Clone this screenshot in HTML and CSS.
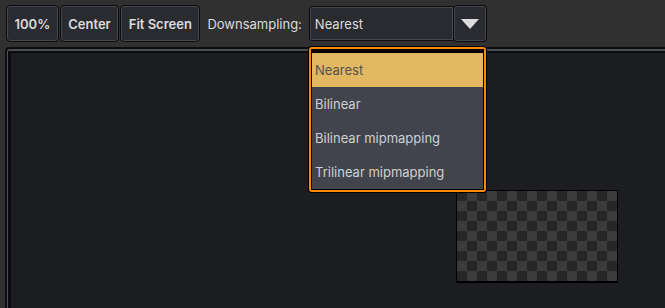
FILE: index.html
```html
<!DOCTYPE html>
<html>
<head>
<meta charset="utf-8">
<link rel="stylesheet" href="styles.css">
</head>
<body>
<div class="toolbar">
  <button class="btn">100%</button>
  <button class="btn">Center</button>
  <button class="btn">Fit Screen</button>
  <span class="label">Downsampling:</span>
  <div class="select">
    <div class="field">Nearest</div>
    <button class="arrow">
      <svg width="18" height="10" viewBox="0 0 18 10"><path d="M0 0H18L9 10Z" fill="#dcdcdc"/></svg>
    </button>
  </div>
</div>
<div class="panel">
  <div class="panel-mid">
    <div class="panel-inner">
      <div class="checker"></div>
    </div>
  </div>
</div>
<div class="popup">
  <div class="popup-ring">
    <div class="popup-body">
      <div class="item active">Nearest</div>
      <div class="item">Bilinear</div>
      <div class="item">Bilinear mipmapping</div>
      <div class="item">Trilinear mipmapping</div>
    </div>
  </div>
</div>
</body>
</html>
```

FILE: styles.css
```css
* { box-sizing: border-box; }
html, body { margin: 0; padding: 0; }
body {
  width: 665px;
  height: 308px;
  overflow: hidden;
  background: #303030;
  font-family: Inter, "Noto Sans", sans-serif;
  font-size: 13px;
  color: #dcdcdc;
  position: relative;
}
.toolbar {
  display: flex;
  align-items: center;
  height: 37px;
  margin: 5px 0 0 6px;
  gap: 1px;
}
.btn {
  height: 37px;
  padding: 0 7.5px;
  background: #2a2b30;
  border: 1px solid #0c0c0e;
  border-radius: 4px;
  box-shadow: inset 0 0 0 1px #45474e;
  color: #dcdcdc;
  font-family: inherit;
  font-size: 13px;
  font-weight: 600;
}
.label {
  margin-left: 6px;
  color: #dcdcdc;
}
.select {
  display: flex;
  align-items: center;
  margin-left: 6px;
}
.field {
  width: 145px;
  height: 35px;
  display: flex;
  align-items: center;
  padding-left: 5px;
  background: #2a2b30;
  border: 1px solid #0c0c0e;
  border-radius: 3px 0 0 3px;
  box-shadow: inset 0 0 0 1px #45474e;
  color: #dcdcdc;
}
.arrow {
  width: 34px;
  height: 37px;
  margin-left: -1px;
  padding: 0;
  display: flex;
  align-items: center;
  justify-content: center;
  background: #2a2b30;
  border: 1px solid #0c0c0e;
  border-radius: 4px;
  box-shadow: inset 0 0 0 1px #45474e;
}
.arrow svg { display: block; }
.panel {
  margin: 5px 0 0 5px;
  height: 261px;
  border-style: solid;
  border-color: #0c0c0e;
  border-width: 2px 0 0 2px;
  border-radius: 4px 0 0 0;
}
.panel-mid {
  height: 100%;
  border-style: solid;
  border-color: #4c4f57;
  border-width: 2px 0 0 1px;
  border-radius: 3px 0 0 0;
}
.panel-inner {
  height: 100%;
  position: relative;
  background: #1c1d21;
  border-style: solid;
  border-color: #0c0c0e;
  border-width: 2px 0 0 3px;
}
.checker {
  position: absolute;
  left: 445px;
  top: 137px;
  width: 162px;
  height: 93px;
  border: 1px solid #000;
  border-bottom-width: 2px;
  background-color: #262626;
  background-image: conic-gradient(#3b3b3b 0 25%, transparent 0 50%, #3b3b3b 0 75%, transparent 0);
  background-size: 20px 20px;
}
.popup {
  position: absolute;
  left: 308px;
  top: 46px;
  width: 179px;
  padding: 1px;
  background: #000;
  border-radius: 4px;
}
.popup-ring {
  border: 2px solid #ff8a00;
  border-radius: 3px;
}
.popup-body {
  border: 1px solid #000;
  border-top-width: 4px;
  background: #41444c;
}
.item {
  height: 34px;
  display: flex;
  align-items: center;
  padding-left: 3px;
  color: #cfd0d3;
}
.item.active {
  background: #e2b863;
  color: #52514d;
}
```
